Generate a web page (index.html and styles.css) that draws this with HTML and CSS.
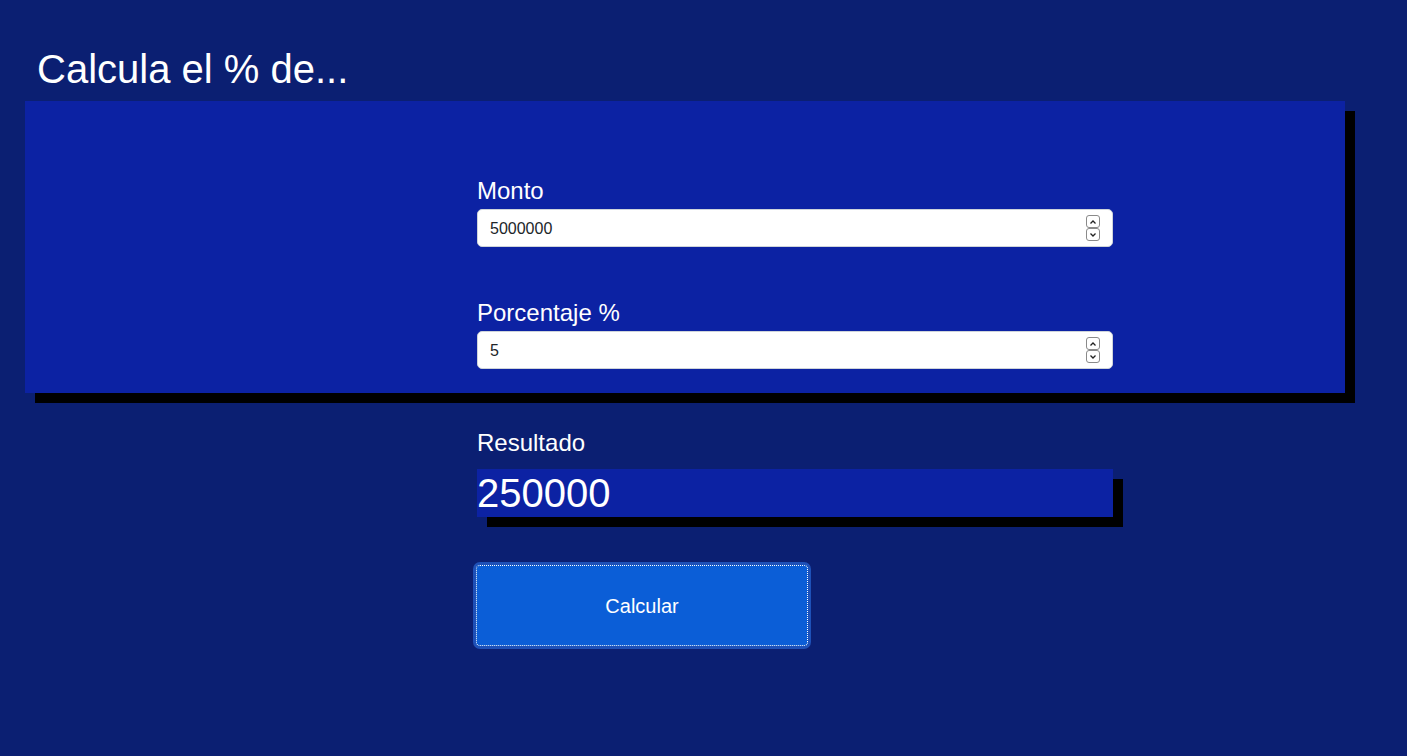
FILE: index.html
```html
<!DOCTYPE html>
<html lang="es">
<head>
<meta charset="utf-8">
<title>Calcula el % de...</title>
<link rel="stylesheet" href="styles.css">
</head>
<body>
<div class="container">
  <h1 class="title">Calcula el % de...</h1>
  <div class="panel">
    <div class="form-col">
      <div class="group">
        <label class="label" for="monto">Monto</label>
        <div class="field">
          <input class="input" id="monto" type="number" value="5000000">
          <div class="spin">
            <span class="spin-btn"><svg width="8" height="6" viewBox="0 0 8 6"><path d="M1.5 4.5 L4 2 L6.5 4.5" fill="none" stroke="#222" stroke-width="1.3"/></svg></span>
            <span class="spin-btn"><svg width="8" height="6" viewBox="0 0 8 6"><path d="M1.5 1.5 L4 4 L6.5 1.5" fill="none" stroke="#222" stroke-width="1.3"/></svg></span>
          </div>
        </div>
      </div>
      <div class="group group-next">
        <label class="label" for="porc">Porcentaje %</label>
        <div class="field">
          <input class="input" id="porc" type="number" value="5">
          <div class="spin">
            <span class="spin-btn"><svg width="8" height="6" viewBox="0 0 8 6"><path d="M1.5 4.5 L4 2 L6.5 4.5" fill="none" stroke="#222" stroke-width="1.3"/></svg></span>
            <span class="spin-btn"><svg width="8" height="6" viewBox="0 0 8 6"><path d="M1.5 1.5 L4 4 L6.5 1.5" fill="none" stroke="#222" stroke-width="1.3"/></svg></span>
          </div>
        </div>
      </div>
    </div>
  </div>
  <div class="form-col result-section">
    <div class="label">Resultado</div>
    <div class="result">250000</div>
    <button class="btn" type="button">Calcular</button>
  </div>
</div>
</body>
</html>
```

FILE: styles.css
```css
* { box-sizing: border-box; }

html, body {
  margin: 0;
  padding: 0;
}

body {
  background: #0b1f72;
  font-family: "Liberation Sans", Arial, sans-serif;
  color: #ffffff;
  min-height: 756px;
}

.container {
  width: 1320px;
  margin-left: 25px;
}

.title {
  margin: 45px 0 8px;
  padding-left: 12px;
  font-size: 40px;
  line-height: 48px;
  font-weight: 400;
}

.panel {
  background: #0c22a3;
  box-shadow: 10px 10px 0 #000;
  padding: 72px 0 24px;
}

.form-col {
  width: 636px;
  margin-left: 452px;
}

.group-next {
  margin-top: 48px;
}

.label {
  display: block;
  font-size: 24px;
  line-height: 36px;
  color: #ffffff;
}

.field {
  position: relative;
}

.input {
  display: block;
  width: 100%;
  height: 38px;
  padding: 7px 12px 5px;
  border: 1px solid #ced4da;
  border-radius: 5px;
  background: #ffffff;
  color: #212529;
  font-family: "Liberation Sans", Arial, sans-serif;
  font-size: 16px;
  line-height: 24px;
  -moz-appearance: textfield;
  appearance: textfield;
}

.input::-webkit-inner-spin-button,
.input::-webkit-outer-spin-button {
  -webkit-appearance: none;
  margin: 0;
}

.spin {
  position: absolute;
  right: 13px;
  top: 6px;
  display: flex;
  flex-direction: column;
}

.spin-btn {
  display: flex;
  align-items: center;
  justify-content: center;
  width: 14px;
  height: 13px;
  border: 1px solid #8a8a8a;
  border-radius: 3px;
  background: #ffffff;
}

.result-section {
  margin-top: 32px;
}

.result {
  margin-top: 8px;
  height: 48px;
  background: #0c22a3;
  box-shadow: 10px 10px 0 #000;
  font-size: 40px;
  line-height: 48px;
  color: #ffffff;
}

.btn {
  display: block;
  margin: 48px 0 0 -1px;
  width: 332px;
  height: 81px;
  padding: 2px 0 0;
  background: #0b5ed7;
  border: 1px solid #0a58ca;
  border-radius: 4px;
  color: #ffffff;
  font-family: "Liberation Sans", Arial, sans-serif;
  font-size: 20px;
  outline: 1px dotted #ffffff;
  outline-offset: -1px;
  box-shadow: 0 0 0 3px rgba(49, 132, 253, 0.5);
}
```
